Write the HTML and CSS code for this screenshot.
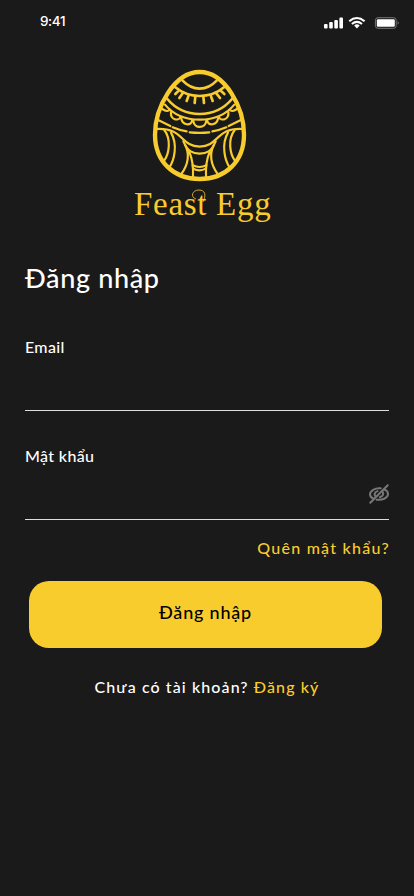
FILE: index.html
```html
<!DOCTYPE html>
<html lang="vi">
<head>
<meta charset="utf-8">
<meta name="viewport" content="width=device-width, initial-scale=1">
<title>Feast Egg</title>
<link rel="stylesheet" href="styles.css">
</head>
<body>
<main class="screen">
  <header class="status">
    <span class="time">9:41</span>
    <svg class="indicators" viewBox="0 0 80 16" aria-hidden="true">
      <g fill="#fff">
        <rect x="4" y="10" width="3.6" height="4.5" rx="1"/><rect x="9.2" y="8" width="3.6" height="6.5" rx="1"/>
        <rect x="14.3" y="6" width="3.6" height="8.5" rx="1"/><rect x="19.4" y="3.6" width="3.6" height="10.9" rx="1"/>
        <rect x="56.8" y="5.2" width="18" height="7.6" rx="1.2"/>
      </g>
      <g fill="none" stroke="#fff" stroke-width="2.1">
        <path d="M29.2 7.2Q36.8 .8 44.6 7.2M31.9 10Q36.9 5.8 42 10"/>
      </g>
      <path d="M34.2 11.4Q36.9 9.3 39.7 11.4L36.9 14.4Z" fill="#fff"/>
      <rect x="55.4" y="3.7" width="20.8" height="10.6" rx="2.6" fill="none" stroke="#777"/>
      <path d="M77.6 7.3Q80 9 77.6 10.8Z" fill="#777"/>
    </svg>
  </header>

  <section class="brand">
    <svg class="egg" viewBox="0 0 360 390" aria-hidden="true">
      <path class="shell" d="M179 36C103 36 45 142 45 224C45 306 103 357 179 357C255 357 312 306 312 224C312 142 255 36 179 36Z"/>
      <g class="bold">
        <path d="M128 62Q151 86 179 86Q207 86 230 62"/>
        <path d="M106 82Q137 108 179 108Q221 108 252 82"/>
        <path d="M114 94L106 102M128 100L118 114M146 106L140 123M166 110L164 129M190 110L192 129M212 106L218 123M229 100L240 114M244 94L253 102"/>
        <path d="M82 117Q120 162 179 162Q238 162 276 117"/>
      </g>
      <g class="fine">
        <path d="M75 134Q112 179 179 179Q246 179 283 134"/>
        <path d="M67 147Q83 158 89 149M93 156C90 180 116 184 121 172M124 175C126 195 154 200 156 182M160 182C162 207 196 207 199 182M202 182C204 200 232 195 234 175M237 172C242 184 268 180 265 156M269 149Q275 158 291 147"/>
        <path d="M56 181L91 198M98 202Q116 210 140 214M149 217Q179 220 208 217M217 214Q241 210 259 202M266 198L301 181"/>
        <path d="M48 207C132 202 119 258 179 260C239 258 226 202 309 207"/>
        <path d="M130 244C144 275 158 281 179 281C200 281 214 275 227 244"/>
        <path d="M73 210C94 238 88 280 72 303M93 218C114 253 103 302 87 324M284 210C263 238 269 280 285 303M264 218C243 253 254 302 270 324"/>
        <path d="M135 254C151 285 141 318 124 342M148 276Q161 306 159 350M222 254C206 285 216 318 233 342M209 276Q196 306 198 350"/>
        <path d="M158 316Q179 326 199 316M160 326Q179 336 197 326"/>
      </g>
    </svg>
    <div class="wordmark">Feast Egg
      <svg class="swash" viewBox="0 0 18 24" aria-hidden="true"><path d="M5 11C-1 9 1 2 8 2C14 2 15.500 7 12 14"/></svg>
    </div>
  </section>

  <form class="login">
    <h1>Đăng nhập</h1>
    <div class="field email"><label for="email">Email</label><input id="email" type="text"></div>
    <div class="field password">
      <label for="password">Mật khẩu</label>
      <div class="entry">
        <input id="password" type="password">
        <svg class="eye" viewBox="0 0 22 20" aria-hidden="true">
          <path d="M12.7 4.3C7 3.6 2 7 2 10.2C2 12 3.5 13.8 5.5 14.7M8.6 15.7C14.8 16.6 20 13.5 20 10C20 7.9 18.5 6.2 16.2 5.1M9.5 7.1C6.1 8.2 6.3 11 7.3 12.1M11.8 13.2C15.2 12.3 15.8 9.7 14.6 7.8M2.3 18.7L19.7 1.3"/>
        </svg>
      </div>
    </div>
    <a class="forgot">Quên mật khẩu?</a>
    <button type="button">Đăng nhập</button>
    <p class="register">Chưa có tài khoản? <a>Đăng ký</a></p>
  </form>
</main>
</body>
</html>
```
FILE: styles.css
```css
* { box-sizing: border-box; }
body { margin: 0; background: #1a1a1a; }
.screen {
  width: 414px; height: 896px; overflow: hidden;
  background: #1a1a1a; color: #fff;
  font-family: Lato, "Open Sans", sans-serif; font-weight: 500;
}
.status { height: 60px; display: flex; justify-content: space-between; padding: 14px 14px 0 40px; }
.time { font: 500 13.5px/15px Inter, sans-serif; letter-spacing: -.4px; }
.indicators { width: 80px; height: 16px; }
.brand { height: 199px; display: flex; flex-direction: column; padding-left: 134px; }
.egg { width: 120px; height: 130px; margin-left: 6px; flex: none; fill: none; stroke: #f9cc2d; stroke-linecap: round; }
.shell { stroke-width: 13; }
.bold { stroke-width: 8; }
.fine { stroke-width: 6.5; }
.wordmark {
  position: relative; width: 140px; height: 40px; margin-top: -6px;
  color: #f9cc2d; font: 33px/40px "Liberation Serif", serif; letter-spacing: .7px; white-space: nowrap;
}
.swash { position: absolute; left: 57px; top: 4px; width: 18px; height: 24px; fill: none; stroke: #f9cc2d; stroke-width: .8; }
.login { display: flex; flex-direction: column; padding: 0 25px; }
h1 { margin: 0; height: 77px; font-size: 27px; line-height: 38px; font-weight: 500; letter-spacing: .65px; }
.field { display: flex; flex-direction: column; border-bottom: 1px solid #dedede; }
.email { height: 75px; }
.password { height: 109px; padding-top: 34px; }
label { font-size: 16px; line-height: 22px; letter-spacing: .35px; }
input { width: 100%; min-width: 0; border: 0; padding: 0; background: transparent; color: #fff; font: inherit; outline: 0; }
.entry { display: flex; margin-top: 17px; }
.eye { width: 22px; height: 20px; flex: none; margin: 0 -1px 0 0; fill: none; stroke: #777; stroke-width: 2; stroke-linecap: round; }
.forgot { align-self: flex-end; margin: 16px -1px 0 0; font-size: 16px; line-height: 24px; color: #f9cc2d; letter-spacing: 1.25px; }
button {
  width: 353px; height: 67px; margin: 21px 0 0 4px; border: 0; border-radius: 20px; padding: 0 0 5px;
  background: #f9cc2d; color: #000; font: 500 18px/24px Lato, sans-serif; letter-spacing: .8px;
}
.register { margin: 27px 0 0; font-size: 16px; line-height: 24px; text-align: center; letter-spacing: 1.1px; }
.register a { color: #f9cc2d; }
```
